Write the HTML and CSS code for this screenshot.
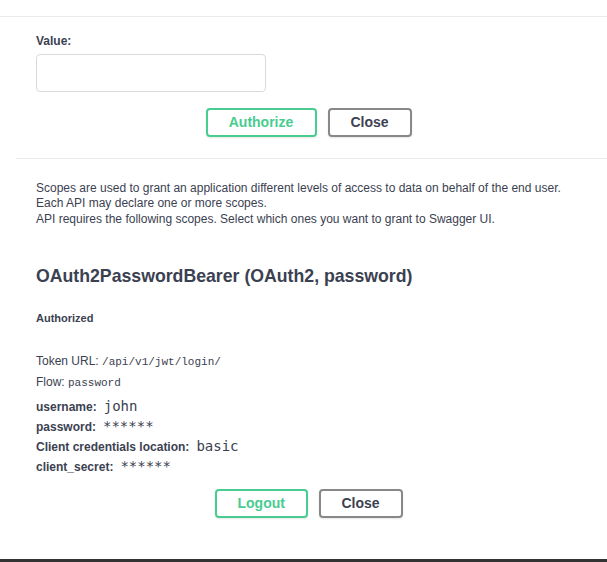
FILE: index.html
```html
<!DOCTYPE html>
<html lang="en">
<head>
<meta charset="utf-8">
<title>Available authorizations</title>
<link rel="stylesheet" href="styles.css">
</head>
<body>
<div class="page">
  <section class="block block-value">
    <div class="wrapper">
      <label class="field-label" for="api-value">Value:</label>
      <input id="api-value" class="text-input" type="text">
    </div>
    <div class="auth-btn-wrapper">
      <button class="btn btn-auth">Authorize</button>
      <button class="btn btn-done">Close</button>
    </div>
  </section>

  <section class="block block-oauth">
    <p class="desc desc-first">Scopes are used to grant an application different levels of access to data on behalf of the end user.<br>Each API may declare one or more scopes.</p>
    <p class="desc">API requires the following scopes. Select which ones you want to grant to Swagger UI.</p>

    <h4 class="scheme-title">OAuth2PasswordBearer (OAuth2, password)</h4>

    <h6 class="status">Authorized</h6>

    <p class="meta meta-first">Token URL: <code class="code-small">/api/v1/jwt/login/</code></p>
    <p class="meta">Flow: <code class="code-small">password</code></p>

    <div class="row row-first"><label class="row-label">username:</label><code class="code-value">john</code></div>
    <div class="row"><label class="row-label">password:</label><code class="code-value">******</code></div>
    <div class="row"><label class="row-label">Client credentials location:</label><code class="code-value">basic</code></div>
    <div class="row"><label class="row-label">client_secret:</label><code class="code-value">******</code></div>

    <div class="auth-btn-wrapper auth-btn-wrapper-bottom">
      <button class="btn btn-auth btn-logout">Logout</button>
      <button class="btn btn-done">Close</button>
    </div>
  </section>

  <div class="footer-bar"></div>
</div>
</body>
</html>
```

FILE: styles.css
```css
* {
  box-sizing: border-box;
}

html, body {
  margin: 0;
  padding: 0;
  background: #ffffff;
}

body {
  font-family: "Liberation Sans", Arial, sans-serif;
  color: #3b4151;
  font-size: 12px;
  line-height: 15px;
  overflow: hidden;
  height: 562px;
}

.page {
  padding-top: 16px;
  display: flex;
  flex-direction: column;
  min-height: 562px;
}

.block {
  border-top: 1px solid #ebebeb;
}

.block-value {
  padding-top: 17px;
  padding-bottom: 11px;
}

.wrapper {
  padding-left: 36px;
  display: flex;
  flex-direction: column;
  align-items: flex-start;
}

.field-label {
  font-weight: 700;
  font-size: 12px;
  line-height: 15px;
  margin-bottom: 5px;
}

.text-input {
  width: 230px;
  height: 38px;
  border: 1px solid #d9d9d9;
  border-radius: 4px;
  background: #fff;
  margin: 0;
  padding: 8px 10px;
  font: inherit;
}

.auth-btn-wrapper {
  display: flex;
  justify-content: center;
  gap: 11px;
  padding: 10px 0;
  margin-top: 6px;
  padding-left: 10px;
}

.btn {
  font-family: "Liberation Sans", Arial, sans-serif;
  font-size: 14px;
  font-weight: 700;
  line-height: 15px;
  height: 29px;
  padding: 5px 21px;
  border: 2px solid #888888;
  border-radius: 4px;
  background: transparent;
  color: #3b4151;
  box-shadow: 0 1px 2px rgba(0, 0, 0, 0.1);
  cursor: pointer;
}

.btn-auth {
  border-color: #49cc90;
  color: #49cc90;
  width: 111px;
}

.btn-logout {
  width: 93px;
}

.btn-done {
  width: 84px;
}

.block-oauth {
  margin-left: 16px;
  padding-left: 20px;
  padding-top: 22px;
}

.desc {
  margin: 0;
  font-size: 12px;
  line-height: 15px;
}

.desc-first {
  margin-bottom: 1px;
}

.scheme-title {
  margin: 38px 0 0;
  font-size: 17.7px;
  line-height: 22px;
  font-weight: 700;
  color: #3b4151;
}

.status {
  margin: 24px 0 0;
  font-size: 11px;
  line-height: 15px;
  font-weight: 700;
}

.meta {
  margin: 0;
  font-size: 12px;
  line-height: 20px;
}

.meta-first {
  margin-top: 25px;
}

.code-small {
  font-family: "Liberation Mono", "Courier New", monospace;
  font-size: 11px;
}

.row {
  display: flex;
  align-items: baseline;
  height: 20px;
  line-height: 20px;
  overflow: visible;
}

.row-first {
  margin-top: 4px;
}

.row-label {
  font-weight: 700;
  font-size: 12px;
}

.code-value {
  font-family: "DejaVu Sans Mono", "Liberation Mono", monospace;
  font-size: 14px;
  line-height: 16px;
  margin-left: 7px;
  color: #3b4151;
}

.auth-btn-wrapper-bottom {
  margin-top: 2px;
  margin-left: -36px;
}

.footer-bar {
  margin-top: 31px;
  height: 10px;
  background: #333333;
}
```
